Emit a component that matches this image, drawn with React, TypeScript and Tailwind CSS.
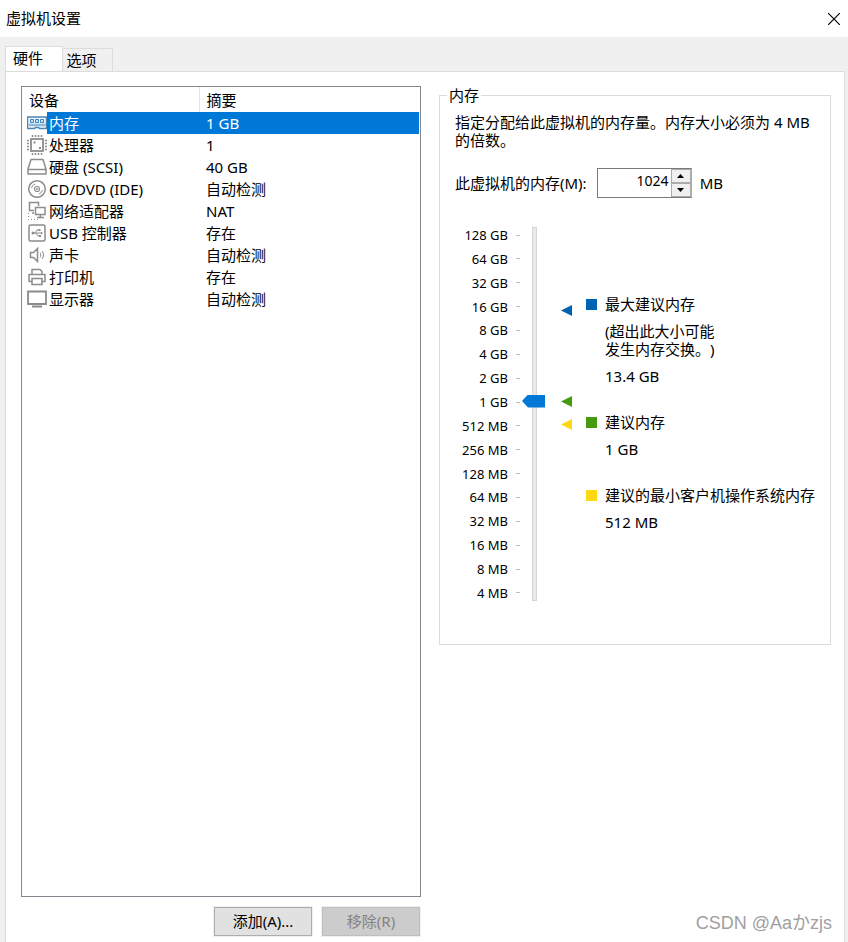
import { useState } from 'react';
import type { ReactNode } from 'react';

interface Device {
  id: string;
  name: string;
  summary: string;
  icon: ReactNode;
}

function Icon({ children, color = 'text-[#8c8c8c]' }: { children: ReactNode; color?: string }) {
  return (
    <svg className={`block h-5 w-5 ${color}`} viewBox="0 0 20 20" fill="none" stroke="currentColor" aria-hidden="true">
      {children}
    </svg>
  );
}

const devices: Device[] = [
  {
    id: 'memory',
    name: '内存',
    summary: '1 GB',
    icon: (
      <Icon color="text-[#4b86b4]">
        <path d="M.5 4h19v11.500h-7l-1-1h-3l-1 1h-7z" fill="#eef5fa" strokeWidth="1.500" />
        <path d="M1.500 12h17" stroke="#8cb8dc" strokeWidth="2.500" />
        <path d="M3.500 6.500h3v3h-3zM8.500 6.500h3v3h-3zM13.500 6.500h3v3h-3z" fill="#cfe3f3" stroke="#3a85c4" />
      </Icon>
    ),
  },
  {
    id: 'cpu',
    name: '处理器',
    summary: '1',
    icon: (
      <Icon>
        <rect x="4" y="4" width="12" height="12" strokeWidth="1.800" />
        <path
          d="M5.500 0v2M8.500 0v2M11.500 0v2M14.500 0v2M5.500 18v2M8.500 18v2M11.500 18v2M14.500 18v2M0 5.500h2M0 8.500h2M0 11.500h2M0 14.500h2M18 5.500h2M18 8.500h2M18 11.500h2M18 14.500h2"
          strokeWidth="1.500"
        />
        <path d="M6.500 6.500h2v2h-2zM12 12h2v2h-2z" fill="currentColor" stroke="none" />
      </Icon>
    ),
  },
  {
    id: 'disk',
    name: '硬盘 (SCSI)',
    summary: '40 GB',
    icon: (
      <Icon>
        <path d="M4 2.500h12l3 9.500v5H1v-5zM1.500 12.500h17" strokeWidth="1.500" strokeLinejoin="round" />
      </Icon>
    ),
  },
  {
    id: 'cd',
    name: 'CD/DVD (IDE)',
    summary: '自动检测',
    icon: (
      <Icon>
        <circle cx="10" cy="10" r="8.300" strokeWidth="1.500" />
        <circle cx="10" cy="10" r="2.500" strokeWidth="1.200" />
        <circle cx="10" cy="10" r="1" fill="currentColor" stroke="none" />
        <path d="M4.500 9a5.500 5.500 0 0 1 3.500-4M15.500 11a5.500 5.500 0 0 1-3.500 4" />
      </Icon>
    ),
  },
  {
    id: 'network',
    name: '网络适配器',
    summary: 'NAT',
    icon: (
      <Icon>
        <path d="M7 9.500H2.500v-8h9V5M5 12h2" strokeWidth="1.500" />
        <path d="M8.500 6.500h9.500v7H8.500zM10 16.500h7M13.300 13.500v3" strokeWidth="1.500" />
        <path d="M1.500 12v6.500h11" strokeDasharray="1 2" />
      </Icon>
    ),
  },
  {
    id: 'usb',
    name: 'USB 控制器',
    summary: '存在',
    icon: (
      <Icon>
        <rect x="2" y="2" width="16" height="16" rx="1.500" strokeWidth="1.500" />
        <path d="M6 10h9M8 10l2-3h2M9 10l2 3h1.500" />
        <circle cx="6" cy="10" r="1.500" fill="currentColor" stroke="none" />
        <path d="M11.500 6h2v2h-2zM12 12h2v2h-2zM14 8.500l2 1.500-2 1.500z" fill="currentColor" stroke="none" />
      </Icon>
    ),
  },
  {
    id: 'sound',
    name: '声卡',
    summary: '自动检测',
    icon: (
      <Icon>
        <path d="M3.500 7.500h3l4-4v13l-4-4h-3z" strokeWidth="1.500" />
        <path d="M13 7.500c1 1.500 1 3.500 0 5M15 6c2 2.500 2 5.500 0 8" />
      </Icon>
    ),
  },
  {
    id: 'printer',
    name: '打印机',
    summary: '存在',
    icon: (
      <Icon>
        <path d="M5 7.500v-5h8l2 2v3M5 14.500H2v-7h16v7h-3" strokeWidth="1.500" strokeLinejoin="round" />
        <path d="M5 11.500h10v6H5z" strokeWidth="1.500" />
      </Icon>
    ),
  },
  {
    id: 'display',
    name: '显示器',
    summary: '自动检测',
    icon: (
      <Icon>
        <path d="M1 2.500h18V15H1zM5 17.500h10" strokeWidth="1.800" />
      </Icon>
    ),
  },
];

const sizes = [
  '128 GB', '64 GB', '32 GB', '16 GB', '8 GB', '4 GB', '2 GB', '1 GB',
  '512 MB', '256 MB', '128 MB', '64 MB', '32 MB', '16 MB', '8 MB', '4 MB',
];

function DeviceTable() {
  const [selected, setSelected] = useState('memory');

  return (
    <div className="flex-1 border border-[#828790] bg-white pr-px">
      <table className="w-full table-fixed border-collapse text-left">
        <colgroup>
          <col className="w-[25px]" />
          <col className="w-[152px]" />
          <col />
        </colgroup>
        <thead>
          <tr className="h-[25px]">
            <th colSpan={2} className="border-r border-[#e5e5e5] p-0 pl-[7px] font-normal">设备</th>
            <th className="p-0 pl-[7px] font-normal">摘要</th>
          </tr>
        </thead>
        <tbody>
          {devices.map((device) => {
            const cell = device.id === selected ? 'bg-[#0078d7] text-white' : '';
            return (
              <tr key={device.id} className="h-[22px] cursor-default" onClick={() => setSelected(device.id)}>
                <td className="p-0 pl-[5px]">{device.icon}</td>
                <td className={`p-0 pl-[2px] whitespace-nowrap ${cell}`}>{device.name}</td>
                <td className={`p-0 pl-[7px] ${cell}`}>{device.summary}</td>
              </tr>
            );
          })}
        </tbody>
      </table>
    </div>
  );
}

function Marker({ color }: { color: string }) {
  return (
    <svg className={`block h-[11px] w-[11px] ${color}`} viewBox="0 0 11 11" fill="currentColor" aria-hidden="true">
      <path d="M0 5.500 11 0v11z" />
    </svg>
  );
}

function MemoryScale({ value, onChange }: { value: number; onChange: (value: number) => void }) {
  return (
    <div className="flex">
      <ul className="flex h-[378px] w-[65px] flex-col justify-between text-[13px]">
        {sizes.map((size) => (
          <li key={size} className="flex h-5 items-center justify-end gap-2">
            {size}
            <span className="h-px w-1 bg-[#c0c0c0]" />
          </li>
        ))}
      </ul>
      <div className="ml-[2px] grid w-[25px]">
        <div className="col-start-1 row-start-1 mt-[2px] h-[374px] w-[5px] justify-self-center border border-[#d6d6d6] bg-[#e7eaea]" />
        <input
          type="range"
          aria-label="内存大小"
          min={2}
          max={17}
          value={value}
          onChange={(e) => onChange(Number(e.target.value))}
          className="col-start-1 row-start-1 mt-[2px] h-[372px] w-[23px] appearance-none bg-transparent [direction:rtl] [writing-mode:vertical-lr] [&::-webkit-slider-thumb]:h-[13px] [&::-webkit-slider-thumb]:w-[23px] [&::-webkit-slider-thumb]:appearance-none [&::-webkit-slider-thumb]:bg-[#0078d7] [&::-webkit-slider-thumb]:[clip-path:polygon(0_50%,6px_0,100%_0,100%_100%,6px_100%)]"
        />
      </div>
      <div className="ml-[14px] flex flex-col pt-[80px]">
        <Marker color="text-[#0063b1]" />
        <div className="mt-[80px] flex flex-col gap-3">
          <Marker color="text-[#459a0d]" />
          <Marker color="text-[#ffd90f]" />
        </div>
      </div>
      <dl className="ml-[14px] pt-[70px] leading-[18px]">
        <dt className="flex items-center gap-2">
          <span className="h-[11px] w-[11px] bg-[#0063b1]" />
          最大建议内存
        </dt>
        <dd className="mt-[9px] ml-[19px] w-[116px]">(超出此大小可能发生内存交换。)</dd>
        <dd className="mt-[9px] ml-[19px]">13.4 GB</dd>
        <dt className="mt-7 flex items-center gap-2">
          <span className="h-[11px] w-[11px] bg-[#459a0d]" />
          建议内存
        </dt>
        <dd className="mt-[9px] ml-[19px]">1 GB</dd>
        <dt className="mt-7 flex items-center gap-2 whitespace-nowrap">
          <span className="h-[11px] w-[11px] bg-[#ffd90f]" />
          建议的最小客户机操作系统内存
        </dt>
        <dd className="mt-[9px] ml-[19px]">512 MB</dd>
      </dl>
    </div>
  );
}

function MemoryPanel() {
  const [memory, setMemory] = useState(1024);
  const spin = 'flex flex-1 items-center justify-center border border-[#acacac] bg-[#f0f0f0]';

  return (
    <fieldset className="min-w-0 flex-1 self-start border border-[#dcdcdc] pb-[41px] pl-[15px]">
      <legend className="-ml-[8px] px-[2px] leading-[18px]">内存</legend>
      <p className="mt-[9px] pr-3 leading-[18px]">
        指定分配给此虚拟机的内存量。内存大小必须为 4 MB 的倍数。
      </p>
      <div className="mt-[19px] flex items-center">
        <label htmlFor="memory">此虚拟机的内存(M):</label>
        <div className="ml-[10px] flex h-[30px] w-[95px] border border-[#7a7a7a] border-r-[#acacac]">
          <input
            id="memory"
            type="number"
            step={4}
            value={memory}
            onChange={(e) => setMemory(Number(e.target.value))}
            className="min-w-0 flex-1 appearance-none pr-[2px] pb-1 text-right text-[14px] outline-none [&::-webkit-inner-spin-button]:appearance-none"
          />
          <div className="flex w-5 flex-col">
            <button type="button" aria-label="增加" className={spin} onClick={() => setMemory(memory + 4)}>
              <svg className="h-1 w-[7px]" viewBox="0 0 7 4"><path d="M0 4 3.500 0 7 4z" /></svg>
            </button>
            <button type="button" aria-label="减少" className={spin} onClick={() => setMemory(Math.max(4, memory - 4))}>
              <svg className="h-1 w-[7px]" viewBox="0 0 7 4"><path d="M0 0h7L3.500 4z" /></svg>
            </button>
          </div>
        </div>
        <span className="ml-2">MB</span>
      </div>
      <div className="mt-[27px]">
        <MemoryScale value={Math.log2(memory)} onChange={(v) => setMemory(2 ** v)} />
      </div>
    </fieldset>
  );
}

export default function App() {
  return (
    <div className="relative flex min-h-screen flex-col bg-[#f0f0f0] font-['Noto_Sans','Noto_Sans_CJK_SC',sans-serif] text-[15px] leading-[22px] text-black [text-spacing-trim:space-all]">
      <header className="flex h-[37px] items-center justify-between bg-white pr-2 pl-[6px]">
        <h1 className="pb-[2px]">虚拟机设置</h1>
        <button type="button" aria-label="关闭">
          <svg className="block h-3 w-3" viewBox="0 0 12 12" fill="none" stroke="currentColor" strokeWidth="1.200">
            <path d="M0 0l12 12M12 0L0 12" />
          </svg>
        </button>
      </header>

      <div className="flex flex-1 flex-col pt-[9px] pr-[3px] pl-[5px]">
        <div role="tablist" className="flex items-end">
          <button
            type="button"
            role="tab"
            aria-selected="true"
            className="-mb-px h-[26px] w-[58px] border border-b-0 border-[#dcdcdc] bg-white pr-3 pb-1"
          >
            硬件
          </button>
          <button
            type="button"
            role="tab"
            aria-selected="false"
            className="h-[23px] w-[50px] border-t border-r border-[#dcdcdc] pr-3"
          >
            选项
          </button>
        </div>
        <div className="flex flex-1 gap-[18px] border border-b-0 border-[#dcdcdc] bg-white pt-[14px] pr-[13px] pb-[6px] pl-[15px]">
          <div className="flex w-[400px] shrink-0 flex-col">
            <DeviceTable />
            <div className="mt-[10px] flex justify-end gap-[10px] pr-px">
              <button type="button" className="h-[29px] w-[98px] border border-[#adadad] bg-[#e1e1e1] pb-[2px] outline outline-[#f0f0f0]">
                添加(A)...
              </button>
              <button
                type="button"
                disabled
                className="h-[29px] w-[98px] border border-[#bfbfbf] bg-[#cccccc] pb-[2px] text-[#838383] outline outline-[#f0f0f0]"
              >
                移除(R)
              </button>
            </div>
          </div>
          <MemoryPanel />
        </div>
      </div>

      <span className="absolute right-4 bottom-2 font-['Liberation_Sans','Noto_Sans_CJK_JP',sans-serif] text-[18px] text-[#a0a0a0]">
        CSDN @Aaかzjs
      </span>
    </div>
  );
}
